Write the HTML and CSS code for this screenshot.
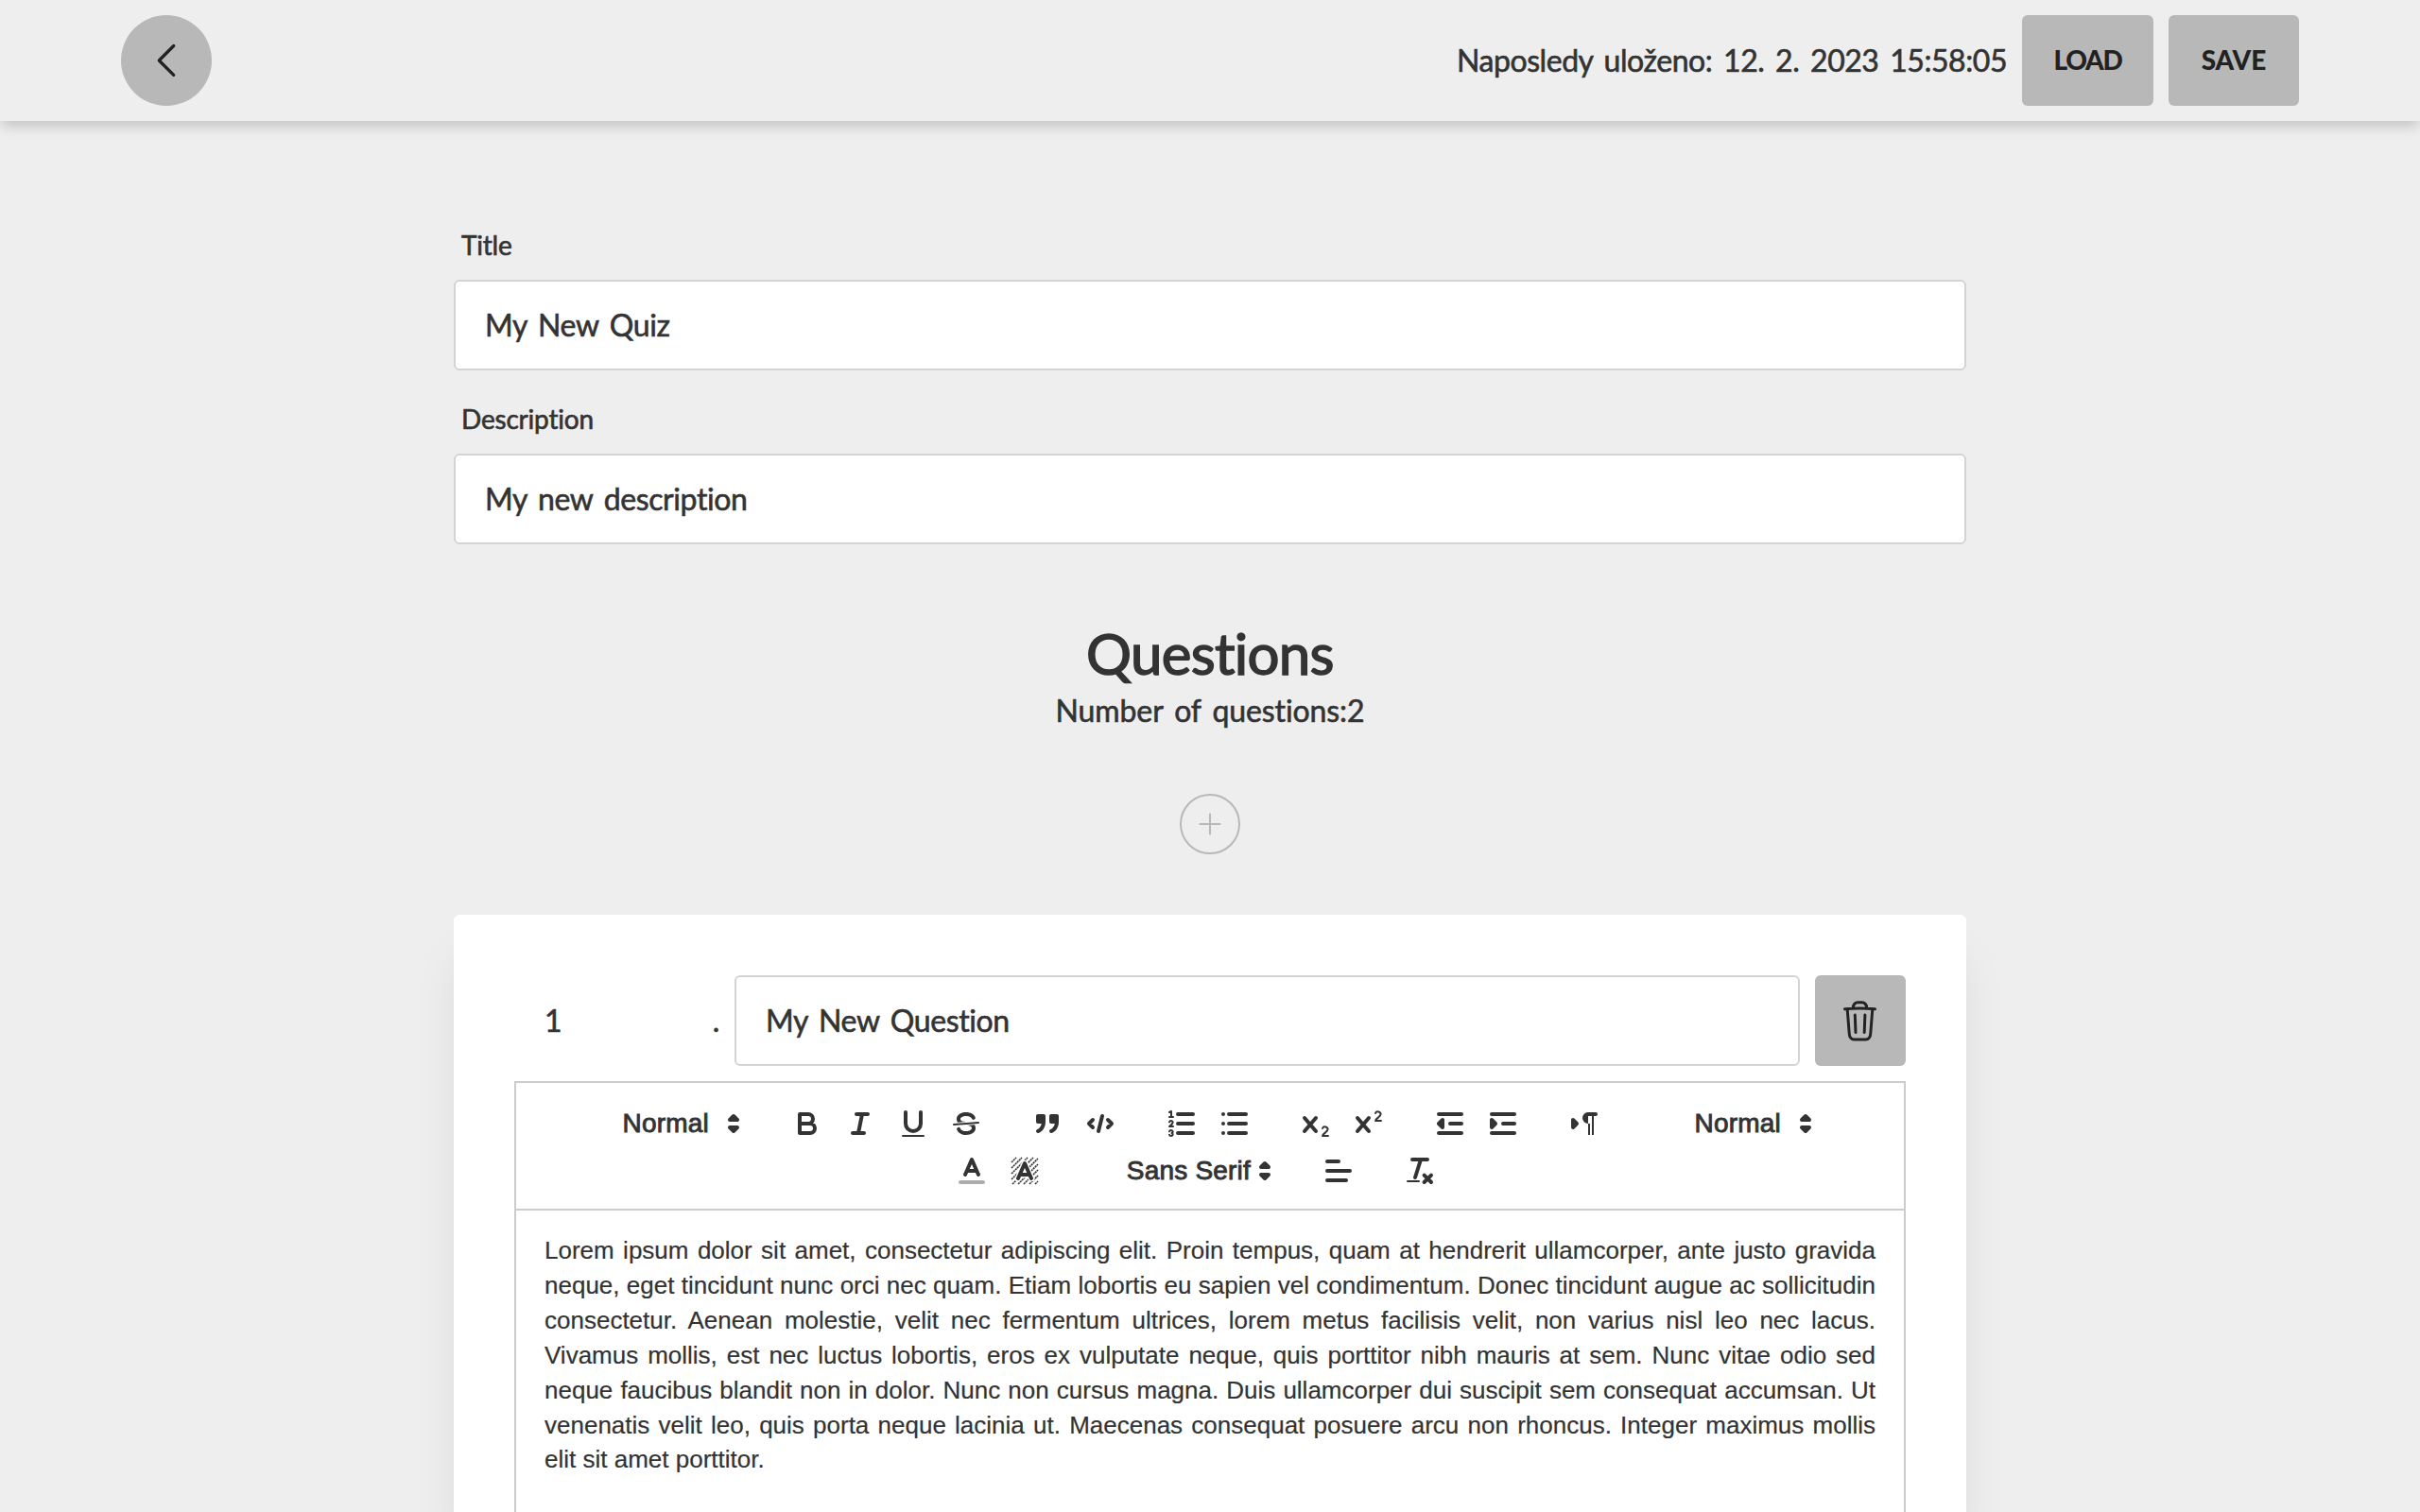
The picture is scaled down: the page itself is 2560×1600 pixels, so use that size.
FILE: index.html
```
<!DOCTYPE html>
<html lang="cs">
<head>
<meta charset="utf-8">
<title>Quiz editor</title>
<link rel="stylesheet" href="styles.css">
</head>
<body>
<header class="topbar">
  <button class="back" aria-label="Back"><svg width="32" height="40" viewBox="0 0 32 40"><path d="M23.7 4.5 8.3 20l15.4 15.4"/></svg></button>
  <div class="actions">
    <span class="saved">Naposledy uloženo: 12. 2. 2023 15:58:05</span>
    <button class="btn load">LOAD</button>
    <button class="btn save">SAVE</button>
  </div>
</header>
<main class="page">
  <label class="label" for="title">Title</label>
  <input class="field" id="title" value="My New Quiz">
  <label class="label second" for="desc">Description</label>
  <input class="field" id="desc" value="My new description">

  <h1 class="heading">Questions</h1>
  <p class="count">Number of questions:2</p>
  <button class="add" aria-label="Add"><svg width="24" height="24" viewBox="0 0 24 24"><path d="M12 1.5v21M1.5 12h21"/></svg></button>

  <section class="card">
    <div class="question">
      <div class="order"><span class="number">1</span><span>.</span></div>
      <input class="field" aria-label="Question" value="My New Question">
      <button class="delete" aria-label="Delete"><svg width="40" height="48" viewBox="0 0 40 48"><path d="M3.5 11.8q16-1.6 32 0M6.2 12l2 25.5q.4 6.500 5.300 6.500h12q4.900 0 5.300-6.500l2-25.500M12.200 11q.4-6.300 5.300-6.300h4q4.900 0 5.300 6.300M14.300 18l.7 18.500M24.900 18l-.7 18.500"/></svg></button>
    </div>
    <div class="toolbar">
      <div class="line">
        <div class="group"><div class="picker size"><span>Normal</span><svg class="arrow" viewBox="0 0 18 18"><path d="m7 11 2 2 2-2zM7 7l2-2 2 2z"/></svg></div></div>
        <div class="group">
          <button class="tool"><svg class="icon" viewBox="0 0 18 18"><path d="M5 4h4.500a2.500 2.500 0 0 1 0 5H5zM5 9h5.500a2.500 2.500 0 0 1 0 5H5z"/></svg></button>
          <button class="tool"><svg class="icon" viewBox="0 0 18 18"><path d="M7 4h6M5 14h6M8 14l2-10"/></svg></button>
          <button class="tool"><svg class="icon" viewBox="0 0 18 18"><path d="M5 3v6a4 4 0 0 0 8 0V3"/><rect class="solid" x="3" y="15" width="12" height="1" rx=".5"/></svg></button>
          <button class="tool"><svg class="icon" viewBox="0 0 18 18"><path class="thin" d="M15.500 8.500l-13 1"/><path class="solid" d="M9.007,8C6.542,7.791,6,7.519,6,6.500,6,5.792,7.283,5,9,5c1.571,0,2.765.679,2.969,1.309a1,1,0,0,0,1.900-.617C13.356,4.106,11.354,3,9,3,6.200,3,4,4.538,4,6.500a3.200,3.200,0,0,0,.5,1.843Z"/><path class="solid" d="M8.984,10C11.457,10.208,12,10.479,12,11.500c0,0.708-1.283,1.500-3,1.500-1.571,0-2.765-.679-2.969-1.309a1,1,0,1,0-1.900.617C4.644,13.894,6.646,15,9,15c2.800,0,5-1.538,5-3.500a3.200,3.200,0,0,0-.5-1.843Z"/></svg></button>
        </div>
        <div class="group">
          <button class="tool"><svg class="icon" viewBox="0 0 18 18"><path class="full" d="M4 5h3v3H4zM11 5h3v3h-3zM7 8c0 4.031-3 5-3 5M14 8c0 4.031-3 5-3 5"/></svg></button>
          <button class="tool"><svg class="icon" viewBox="0 0 18 18"><path d="M5 7 3 9l2 2M13 7l2 2-2 2M10 5 8 13"/></svg></button>
        </div>
        <div class="group">
          <button class="tool"><svg class="icon" viewBox="0 0 18 18"><path d="M7 4h8M7 9h8M7 14h8"/><path class="thin" d="M2.500 5.500h2M2.500 3l1-.5v3M4.500 10.500h-2c0-.234 1.850-1.076 1.850-2.234A.959.959 0 0 0 2.500 8.156M2.500 14.846a.959.959 0 0 0 1.850-.109A.7.7 0 0 0 3.750 14a.688.688 0 0 0 .6-.736.959.959 0 0 0-1.850-.109"/></svg></button>
          <button class="tool"><svg class="icon" viewBox="0 0 18 18"><path d="M6 4h9M6 9h9M6 14h9M3 4h0M3 9h0M3 14h0"/></svg></button>
        </div>
        <div class="group">
          <button class="tool"><svg class="icon" viewBox="0 0 18 18"><path d="M3 6l6 7M9 6l-6 7"/><path class="thin" d="M12.500 11.500c.5-1.300 2.800-1 2.800.5 0 1.500-2.800 2.300-2.800 3.500h3"/></svg></button>
          <button class="tool"><svg class="icon" viewBox="0 0 18 18"><path d="M3 6l6 7M9 6l-6 7"/><path class="thin" d="M12.500 3.500c.5-1.300 2.800-1 2.800.5 0 1.500-2.800 2.300-2.800 3.500h3"/></svg></button>
        </div>
        <div class="group">
          <button class="tool"><svg class="icon" viewBox="0 0 18 18"><path d="M3 14h12M3 4h12M9 9h6"/><path class="full" d="M5 7v4L3 9z"/></svg></button>
          <button class="tool"><svg class="icon" viewBox="0 0 18 18"><path d="M3 14h12M3 4h12M9 9h6"/><path class="full" d="M3 7v4l2-2z"/></svg></button>
        </div>
        <div class="group">
          <button class="tool"><svg class="icon" viewBox="0 0 18 18"><path class="full" d="M3 11l2-2-2-2zM11 4h4"/><path class="solid" d="M11 3a3 3 0 0 0 0 6h1V3zM11 4h1v11h-1zM13 4h1v11h-1z"/></svg></button>
        </div>
        <div class="group"><div class="picker size"><span>Normal</span><svg class="arrow" viewBox="0 0 18 18"><path d="m7 11 2 2 2-2zM7 7l2-2 2 2z"/></svg></div></div>
      </div>
      <div class="line">
        <div class="group">
          <button class="tool"><svg class="icon" viewBox="0 0 18 18"><path class="faded" d="M3 15h12"/><path d="M5.500 11 9 3l3.500 8M11.630 9H6.380"/></svg></button>
          <button class="tool"><svg class="icon" viewBox="0 0 18 18"><path class="hatch" d="M2 4.500 4.500 2M2 7.500 7.500 2M2 10.500 10.500 2M2 13.500 13.500 2M2.500 16 16 2.500M5.500 16 16 5.500M8.500 16 16 8.500M11.500 16 16 11.500M14.500 16l1.500-1.500"/><path class="halo" d="M5.500 13 9 5l3.500 8M11.630 11H6.380"/><path d="M5.500 13 9 5l3.500 8M11.630 11H6.380"/></svg></button>
        </div>
        <div class="group"><div class="picker family"><span>Sans Serif</span><svg class="arrow" viewBox="0 0 18 18"><path d="m7 11 2 2 2-2zM7 7l2-2 2 2z"/></svg></div></div>
        <div class="group"><button class="tool"><svg class="icon" viewBox="0 0 18 18"><path d="M3 9h12M3 14h10M3 4h6"/></svg></button></div>
        <div class="group"><button class="tool"><svg class="icon" viewBox="0 0 18 18"><path d="M5 3h8M6.500 12.500 9.500 3M11.300 11.300l3.700 3.700M15 11.300 11.300 15"/><rect class="solid" x="2" y="14" width="7" height="1" rx=".5"/></svg></button></div>
      </div>
    </div>
    <div class="editor">
      <p>Lorem ipsum dolor sit amet, consectetur adipiscing elit. Proin tempus, quam at hendrerit ullamcorper, ante justo gravida neque, eget tincidunt nunc orci nec quam. Etiam lobortis eu sapien vel condimentum. Donec tincidunt augue ac sollicitudin consectetur. Aenean molestie, velit nec fermentum ultrices, lorem metus facilisis velit, non varius nisl leo nec lacus. Vivamus mollis, est nec luctus lobortis, eros ex vulputate neque, quis porttitor nibh mauris at sem. Nunc vitae odio sed neque faucibus blandit non in dolor. Nunc non cursus magna. Duis ullamcorper dui suscipit sem consequat accumsan. Ut venenatis velit leo, quis porta neque lacinia ut. Maecenas consequat posuere arcu non rhoncus. Integer maximus mollis elit sit amet porttitor.</p>
    </div>
  </section>
</main>
</body>
</html>
```
FILE: styles.css
```
* { box-sizing: border-box; }

html, body { height: 100%; overflow: hidden; }

body {
  display: flex;
  flex-direction: column;
  margin: 0;
  background: #eee;
  color: #333;
  font: 32px/1.2 "Chalkboard SE", Lato, sans-serif;
  letter-spacing: -0.4px;
  word-spacing: 4px;
  -webkit-text-stroke: 0.6px currentColor;
}

button, input {
  font: inherit;
  color: inherit;
  letter-spacing: inherit;
  word-spacing: inherit;
  margin: 0;
  padding: 0;
  border: 0;
  background: none;
}

svg { display: block; fill: none; stroke: currentColor; stroke-linecap: round; stroke-linejoin: round; }

.topbar {
  display: flex;
  flex: none;
  justify-content: space-between;
  align-items: center;
  height: 128px;
  padding: 0 128px;
  background: #eee;
  box-shadow: 0 8px 12px -2px rgba(0, 0, 0, .17);
}

.back, .btn, .delete {
  display: flex;
  align-items: center;
  justify-content: center;
  height: 96px;
  background: #b8b8b8;
  color: #222;
}

.back { width: 96px; border-radius: 50%; }
.back svg { stroke-width: 3.3; }

.actions { display: flex; align-items: center; gap: 16px; }
.saved { letter-spacing: -.45px; }

.btn {
  width: 138px;
  border-radius: 6px;
  font-size: 28px;
  font-weight: 900;
  -webkit-text-stroke: 0;
}

.load { width: 139px; letter-spacing: -1.3px; }
.save { letter-spacing: 0; }

.page {
  display: flex;
  flex: 1;
  flex-direction: column;
  width: 1600px;
  min-height: 0;
  margin: 0 auto;
  padding-top: 112px;
}

.page > * { flex-shrink: 0; }

.label {
  height: 56px;
  padding: 2px 8px 0;
  font-size: 28px;
  line-height: 34px;
  letter-spacing: -0.2px;
}

.label.second { margin-top: 32px; }

.field {
  width: 100%;
  height: 96px;
  padding: 0 32px 2px 31px;
  background: #fff;
  border: 2px solid #d4d4d4;
  border-radius: 6px;
}

.heading {
  margin: 79px 0 0;
  font-size: 60px;
  font-weight: 400;
  line-height: 72px;
  letter-spacing: -.7px;
  text-align: center;
  -webkit-text-stroke-width: 1.5px;
}

.count { margin: 6px 0 0; line-height: 38px; letter-spacing: -.1px; text-align: center; }

.add {
  display: flex;
  align-items: center;
  justify-content: center;
  align-self: center;
  width: 64px;
  height: 64px;
  margin-top: 69px;
  border: 2px solid #b8b8b8;
  border-radius: 50%;
  color: #b8b8b8;
}

.add svg { stroke-width: 2; }

.page > .card {
  display: flex;
  flex: 1;
  flex-direction: column;
  min-height: 0;
  margin-top: 64px;
  padding: 64px 64px 0;
  background: #fff;
  border-radius: 6px 6px 0 0;
  box-shadow: 0 40px 50px -10px rgba(0, 0, 0, .1), 0 16px 20px -12px rgba(0, 0, 0, .05);
}

.question { display: flex; gap: 16px; margin-bottom: 16px; }
.order { display: flex; align-items: center; flex: 0 0 217px; justify-content: space-between; padding-left: 32px; }
.delete { flex: 0 0 96px; border-radius: 6px; }
.delete svg { stroke-width: 3; }

.toolbar {
  flex: none;
  height: 137px;
  padding: 19px 16px;
  border: 2px solid #ccc;
  word-spacing: 0;
}

.line { display: flex; justify-content: center; height: 50px; }
.group { display: flex; height: 48px; margin-right: 30px; }
.tool { width: 56px; height: 48px; padding: 6px 10px; }
.icon { width: 36px; height: 36px; stroke-width: 2; }
.thin { stroke-width: 1; }
.solid { fill: currentColor; stroke: none; }
.full { fill: currentColor; }
.faded { opacity: .4; }
.hatch { stroke-width: .8; stroke-linecap: butt; stroke-dasharray: 1.1 .3; }
.halo { stroke: #fff; stroke-width: 3.4; }

.picker {
  display: flex;
  align-items: center;
  justify-content: flex-end;
  height: 48px;
  padding: 0 2px 2px 0;
  font-family: "Liberation Sans", sans-serif;
  font-size: 28px;
  letter-spacing: .2px;
  -webkit-text-stroke-width: 0.9px;
}

.picker span { padding-top: 2px; white-space: nowrap; }
.picker.size { width: 196px; }
.picker.family { width: 216px; }
.size span { margin-right: 8px; }
.family span { margin-right: -3px; }
.arrow { width: 36px; height: 36px; margin-top: 2px; fill: currentColor; stroke-width: 2; }

.editor {
  flex: 1;
  min-height: 0;
  padding: 24px 30px 0;
  border: solid #ccc;
  border-width: 0 2px;
  font: 26px/1.42 "Liberation Sans", sans-serif;
  letter-spacing: 0;
  word-spacing: 0;
  text-align: justify;
  -webkit-text-stroke-width: 0.2px;
}

.editor p { margin: 0; }
```
